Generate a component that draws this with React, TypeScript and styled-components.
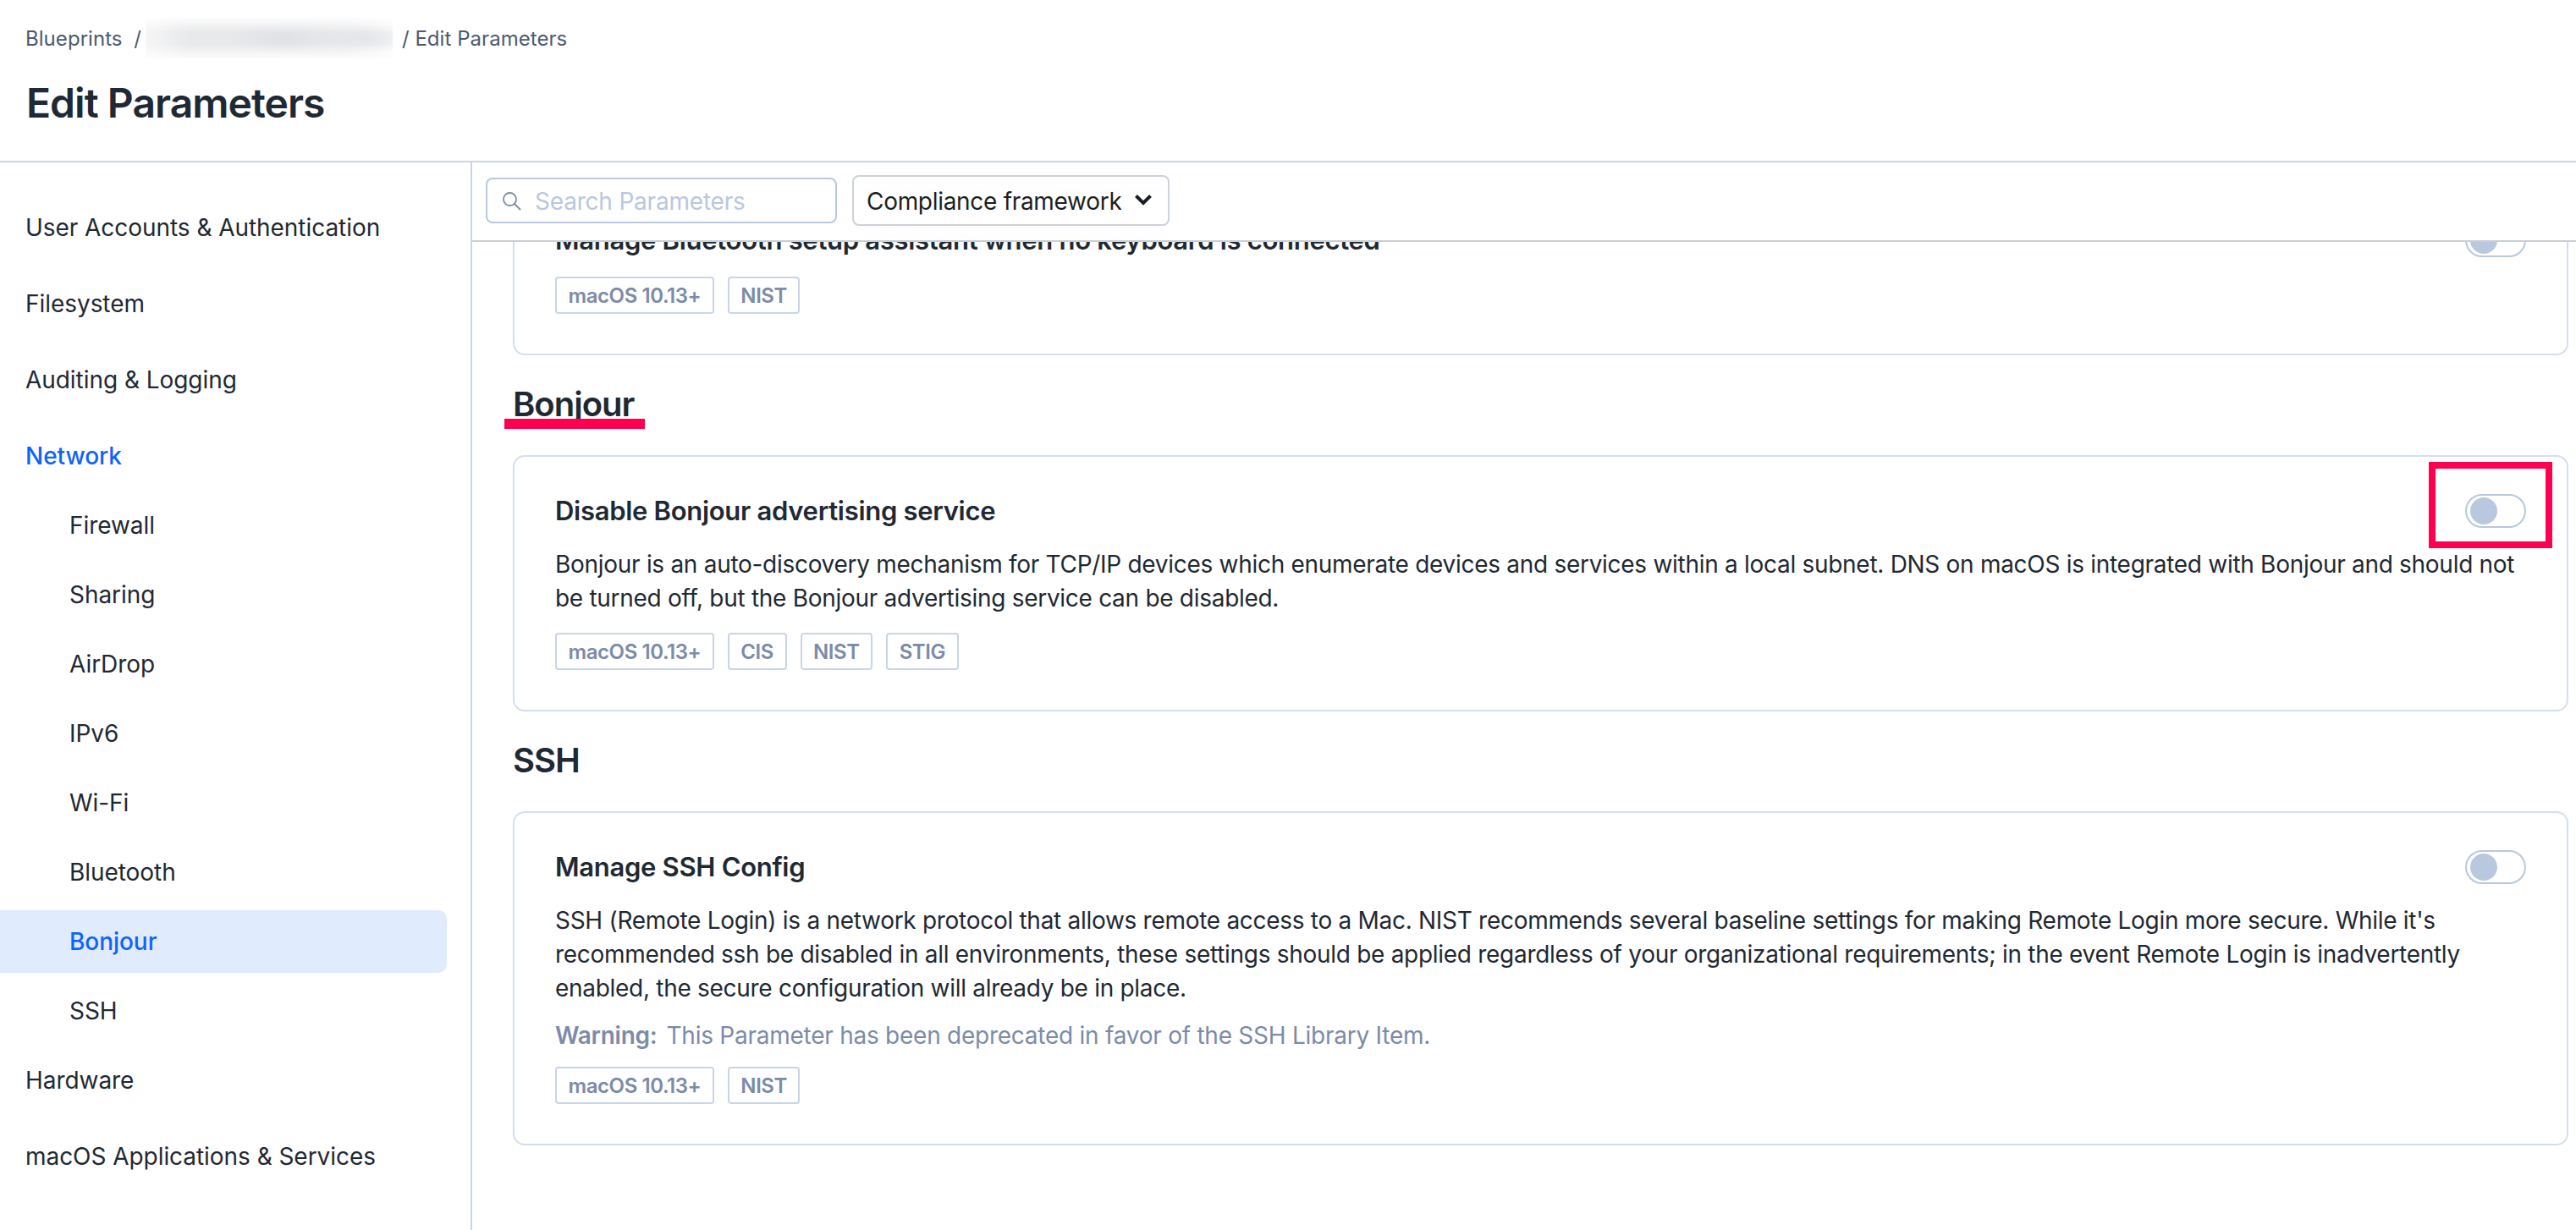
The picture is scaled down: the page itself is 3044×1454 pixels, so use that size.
import React from "react";
import styled, { createGlobalStyle } from "styled-components";

const Global = createGlobalStyle`
  html, body { margin: 0; padding: 0; background: #fff; }
  body { font-family: Inter, "Liberation Sans", sans-serif; color: #1f2933; overflow: hidden; }
  * { box-sizing: border-box; }
`;

const Page = styled.div`
  width: 3044px;
  height: 1454px;
  display: flex;
  flex-direction: column;
  overflow: hidden;
`;

const Header = styled.header`
  height: 192px;
  flex: none;
  padding: 27px 0 0 30px;
  border-bottom: 2px solid #c9d5e6;
`;

const Crumbs = styled.nav`
  display: flex;
  align-items: center;
  height: 36px;
  font-size: 24px;
  letter-spacing: 0.05px;
  color: #4c5a70;
  white-space: nowrap;
`;

const Redacted = styled.span`
  display: block;
  width: 292px;
  height: 48px;
  margin: 0 11px 0 5px;
  background:
    radial-gradient(ellipse 70px 20px at 56% 50%, #dfe1e5 0%, rgba(223, 225, 229, 0) 100%),
    radial-gradient(ellipse 60px 18px at 88% 50%, #e2e4e7 0%, rgba(226, 228, 231, 0) 100%),
    linear-gradient(90deg, #f6f6f7 0%, #e8e9eb 18%, #eaebed 80%, #f8f8f9 100%);
  background-size: 100% 100%;
  mask-image: linear-gradient(180deg, rgba(0,0,0,.15) 0%, #000 35%, #000 65%, rgba(0,0,0,.15) 100%);
`;

const Title = styled.h1`
  margin: 27px 0 0 1px;
  font-size: 48px;
  line-height: 64px;
  font-weight: 600;
  letter-spacing: -0.95px;
  color: #1f2933;
`;

const Body = styled.div`
  flex: 1;
  display: flex;
  min-height: 0;
`;

const Sidebar = styled.aside`
  width: 558px;
  flex: none;
  border-right: 2px solid #c9d5e6;
  padding: 40px 28px 0 0;
  display: flex;
  flex-direction: column;
`;

const NavItem = styled.a<{ $child?: boolean; $open?: boolean; $active?: boolean; $gap: number }>`
  height: 74px;
  flex: none;
  display: flex;
  align-items: center;
  padding-left: ${(p) => (p.$child ? 82 : 30)}px;
  margin-bottom: ${(p) => p.$gap}px;
  font-size: 28px;
  letter-spacing: -0.05px;
  border-radius: 0 10px 10px 0;
  color: ${(p) => (p.$open || p.$active ? "#0f62fe" : "#1f2933")};
  font-weight: ${(p) => (p.$open || p.$active ? 500 : 400)};
  background: ${(p) => (p.$active ? "#e0ebfd" : "transparent")};
`;

const Main = styled.main`
  flex: 1;
  min-width: 0;
  display: flex;
  flex-direction: column;
`;

const Toolbar = styled.div`
  height: 94px;
  flex: none;
  display: flex;
  align-items: center;
  gap: 18px;
  padding: 0 0 2px 16px;
  border-bottom: 2px solid #c8ced6;
`;

const SearchBox = styled.label`
  width: 415px;
  height: 54px;
  display: flex;
  align-items: center;
  gap: 16px;
  padding: 2px 0 0 17px;
  border: 2px solid #b9c8de;
  border-radius: 8px;
  font-size: 28px;
  letter-spacing: -0.2px;
  color: #b9c8de;
  svg { color: #7c8ba8; flex: none; margin-top: -2px; }
`;

const Select = styled.div`
  width: 375px;
  height: 60px;
  display: flex;
  align-items: center;
  justify-content: space-between;
  padding: 2px 18px 0 15px;
  border: 2px solid #ccd2d9;
  border-radius: 8px;
  font-size: 28px;
  letter-spacing: -0.3px;
  color: #1b1f23;
  svg { margin-top: -4px; }
`;

const Scroll = styled.div`
  flex: 1;
  min-height: 0;
  overflow: hidden;
  padding: 0 9px 0 48px;
`;

const Card = styled.section<{ $first?: boolean }>`
  border: 2px solid #d5dfec;
  border-radius: 14px;
  padding: 44px 48px 47px;
  margin-top: ${(p) => (p.$first ? -68 : 0)}px;
`;

const CardHead = styled.div`
  display: flex;
  align-items: center;
  justify-content: space-between;
  height: 40px;
`;

const CardTitle = styled.h3`
  margin: 0;
  font-size: 31px;
  line-height: 40px;
  font-weight: 600;
  letter-spacing: -0.3px;
  color: #1f2933;
`;

const Toggle = styled.span`
  position: relative;
  display: flex;
  align-items: center;
  width: 72px;
  height: 40px;
  padding-left: 4px;
  border: 2px solid #b9c8de;
  border-radius: 20px;
  &::before {
    content: "";
    width: 32px;
    height: 32px;
    border-radius: 50%;
    background: #b9c8de;
  }
`;

const Mark = styled.span`
  position: absolute;
  left: -45px;
  top: -40px;
  width: 146px;
  height: 102px;
  border: 8px solid #ff0050;
`;

const Description = styled.p`
  margin: 23px 0 0;
  font-size: 28px;
  line-height: 40px;
  letter-spacing: -0.29px;
  color: #1f2933;
`;

const Warning = styled.p`
  margin: 16px 0 0;
  font-size: 28px;
  line-height: 40px;
  letter-spacing: -0.25px;
  color: #7c8ba8;
  strong { font-weight: 600; margin-right: 11px; }
`;

const Tags = styled.div<{ $gap: number }>`
  display: flex;
  gap: 16px;
  margin-top: ${(p) => p.$gap}px;
`;

const Tag = styled.span`
  height: 44px;
  display: flex;
  align-items: center;
  padding: 0 13.5px;
  border: 2px solid #c9d5e6;
  border-radius: 4px;
  font-size: 24px;
  font-weight: 600;
  letter-spacing: -0.42px;
  color: #7c8ba8;
`;

const SectionHeading = styled.h2`
  position: relative;
  width: fit-content;
  margin: 34px 0 36px;
  font-size: 40px;
  line-height: 48px;
  font-weight: 600;
  letter-spacing: -1px;
  color: #1f2933;
`;

const Underline = styled.span`
  position: absolute;
  left: -10px;
  top: 41px;
  width: 166px;
  height: 12px;
  background: #ff0050;
`;

const nav: { label: string; child?: boolean; open?: boolean; active?: boolean; gap: number }[] = [
  { label: "User Accounts & Authentication", gap: 16 },
  { label: "Filesystem", gap: 16 },
  { label: "Auditing & Logging", gap: 16 },
  { label: "Network", open: true, gap: 8 },
  { label: "Firewall", child: true, gap: 8 },
  { label: "Sharing", child: true, gap: 8 },
  { label: "AirDrop", child: true, gap: 8 },
  { label: "IPv6", child: true, gap: 8 },
  { label: "Wi-Fi", child: true, gap: 8 },
  { label: "Bluetooth", child: true, gap: 8 },
  { label: "Bonjour", child: true, active: true, gap: 8 },
  { label: "SSH", child: true, gap: 8 },
  { label: "Hardware", gap: 16 },
  { label: "macOS Applications & Services", gap: 0 },
];

export default function App() {
  return (
    <Page>
      <Global />
      <Header>
        <Crumbs>
          Blueprints&nbsp;&nbsp;/
          <Redacted />/&nbsp;Edit Parameters
        </Crumbs>
        <Title>Edit Parameters</Title>
      </Header>
      <Body>
        <Sidebar>
          {nav.map((n) => (
            <NavItem key={n.label} $child={n.child} $open={n.open} $active={n.active} $gap={n.gap}>
              {n.label}
            </NavItem>
          ))}
        </Sidebar>
        <Main>
          <Toolbar>
            <SearchBox>
              <svg width="23" height="23" viewBox="0 0 23 23" fill="none" stroke="currentColor" strokeWidth="1.8">
                <circle cx="9.5" cy="9.5" r="7.5" />
                <path d="M15 15l6.500 6.500" strokeLinecap="round" />
              </svg>
              Search Parameters
            </SearchBox>
            <Select>
              Compliance framework
              <svg width="22" height="15" viewBox="0 0 22 15" fill="none" stroke="#1b1f23" strokeWidth="4">
                <path d="M2.500 2.500l8.500 8.500 8.500-8.500" />
              </svg>
            </Select>
          </Toolbar>
          <Scroll>
            <Card $first>
              <CardHead>
                <CardTitle>Manage Bluetooth setup assistant when no keyboard is connected</CardTitle>
                <Toggle />
              </CardHead>
              <Tags $gap={23}>
                <Tag>macOS 10.13+</Tag>
                <Tag>NIST</Tag>
              </Tags>
            </Card>
            <SectionHeading>
              Bonjour
              <Underline />
            </SectionHeading>
            <Card>
              <CardHead>
                <CardTitle>Disable Bonjour advertising service</CardTitle>
                <Toggle>
                  <Mark />
                </Toggle>
              </CardHead>
              <Description>
                Bonjour is an auto-discovery mechanism for TCP/IP devices which enumerate devices and services within a local subnet. DNS on macOS is integrated with Bonjour and should not be turned off, but the Bonjour advertising service can be disabled.
              </Description>
              <Tags $gap={21}>
                <Tag>macOS 10.13+</Tag>
                <Tag>CIS</Tag>
                <Tag>NIST</Tag>
                <Tag>STIG</Tag>
              </Tags>
            </Card>
            <SectionHeading>SSH</SectionHeading>
            <Card>
              <CardHead>
                <CardTitle>Manage SSH Config</CardTitle>
                <Toggle />
              </CardHead>
              <Description>
                SSH (Remote Login) is a network protocol that allows remote access to a Mac. NIST recommends several baseline settings for making Remote Login more secure. While it's recommended ssh be disabled in all environments, these settings should be applied regardless of your organizational requirements; in the event Remote Login is inadvertently enabled, the secure configuration will already be in place.
              </Description>
              <Warning>
                <strong>Warning:</strong>This Parameter has been deprecated in favor of the SSH Library Item.
              </Warning>
              <Tags $gap={17}>
                <Tag>macOS 10.13+</Tag>
                <Tag>NIST</Tag>
              </Tags>
            </Card>
          </Scroll>
        </Main>
      </Body>
    </Page>
  );
}
